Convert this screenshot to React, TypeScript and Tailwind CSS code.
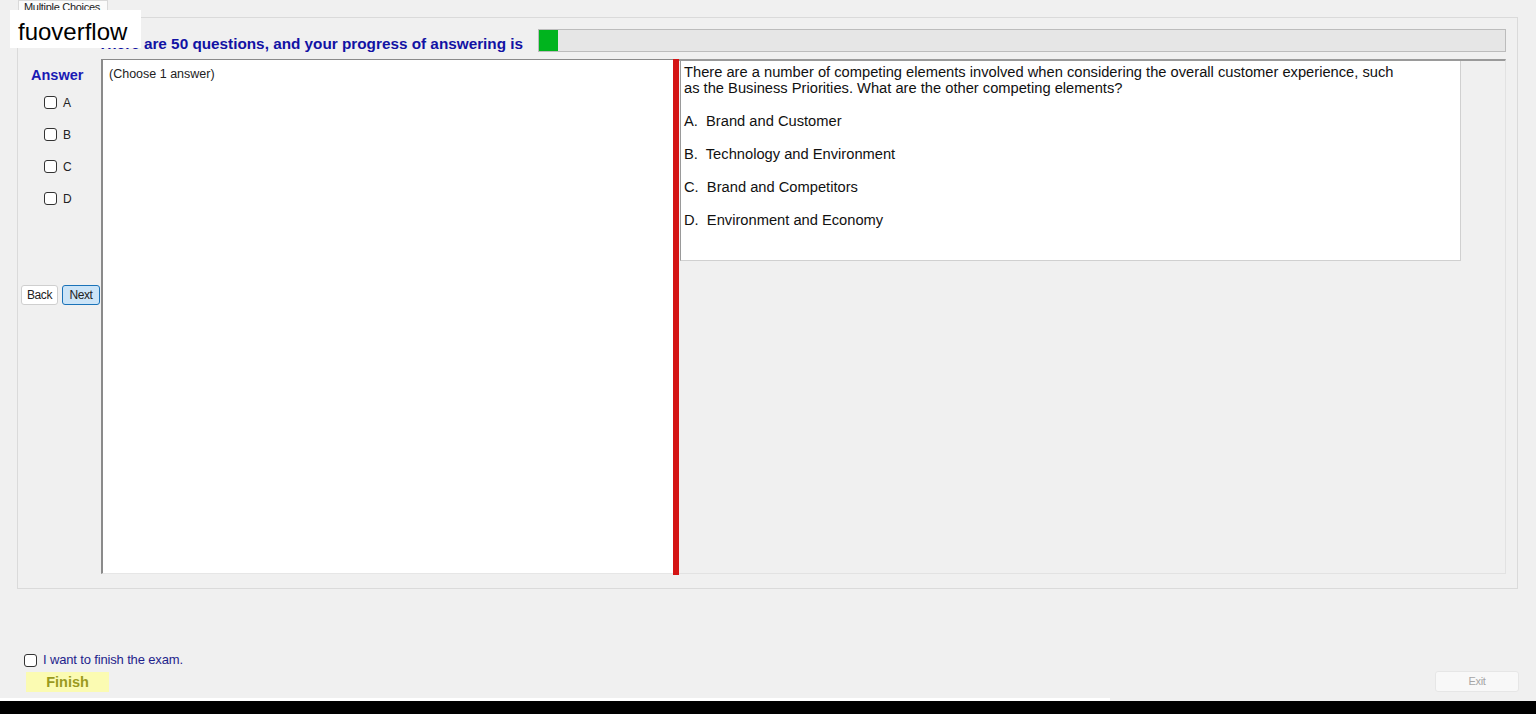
const options = [
  "Brand and Customer",
  "Technology and Environment",
  "Brand and Competitors",
  "Environment and Economy",
];

const Box = () => (
  <span className="inline-block w-[13px] h-[13px] border border-[#333333] rounded-[3px] bg-white" />
);

const App = () => {
  return (
    <div
      className="relative w-full h-[714px] overflow-hidden bg-[#f0f0f0] text-black flex flex-col"
      style={{ fontFamily: '"Liberation Sans", Arial, sans-serif' }}
    >
      {/* tab strip */}
      <div className="h-[17px] pl-[18px] flex">
        <div className="w-[90px] h-[17px] border border-b-0 border-[#d9d9d9] bg-[#fbfbfb] text-[11px] leading-[12px] pl-[5px] tracking-[-0.3px] text-[#222]">
          Multiple Choices
        </div>
      </div>

      {/* tab page */}
      <div className="ml-[17px] mr-[18px] h-[572px] border border-[#dadada] flex flex-col">
        <div className="h-[41px] pt-[11px] pl-[80px] pr-[11px] flex items-start">
          <div className="h-[22px] pt-[8px] flex items-center text-[15.3px] font-bold text-[#1212a4] whitespace-nowrap">
            There are 50 questions, and your progress of answering is
          </div>
          <div className="ml-[15px] flex-1 h-[23px] border border-[#bcbcbc] bg-[#e6e6e6] flex">
            <div className="w-[19px] h-full bg-[#00b41e]" />
          </div>
        </div>

        <div className="flex h-[516px]">
          {/* answer column */}
          <div className="w-[83px] flex flex-col">
            <div className="pl-[13px] pt-[8px] text-[14.5px] font-bold text-[#1a1ab4] leading-[16px]">
              Answer
            </div>
            <div className="flex flex-col gap-[19px] mt-[13px] pl-[26px]">
              {["A", "B", "C", "D"].map((l) => (
                <label key={l} className="flex items-center gap-[6px] h-[13px] text-[12px] text-[#222]">
                  <Box />
                  {l}
                </label>
              ))}
            </div>
            <div className="flex gap-[4px] pl-[3px] mt-[80px]">
              <button className="w-[37px] h-[20px] border border-[#cfcfcf] bg-white rounded-[3px] text-[12px] tracking-[-0.4px] text-[#222]">
                Back
              </button>
              <button className="w-[38px] h-[20px] border border-[#1a72b8] bg-[#cce4f7] rounded-[3px] text-[12px] tracking-[-0.4px] text-[#222]">
                Next
              </button>
            </div>
          </div>

          {/* answer notes */}
          <div className="w-[572px] h-[515px] bg-white border-l-2 border-t border-[#8a8a8a] border-b border-b-[#e6e6e6] pl-[6px] pt-[5px] text-[12.5px] text-[#222]">
            (Choose 1 answer)
          </div>

          {/* splitter */}
          <div className="w-[6px] h-[516px] bg-[#d41414]" />

          {/* question */}
          <div className="flex-1 mr-[11px] h-[515px] border-t-2 border-[#9a9a9a] border-r border-r-[#e2e2e2] border-b border-b-[#e2e2e2] pl-[1px]">
            <div className="w-[781px] h-[200px] bg-white border border-t-0 border-[#d0d0d0] border-l-[#9a9a9a] pl-[3px] pt-[3px] text-[14.7px] text-[#111]">
              <p className="leading-[16px]">
                There are a number of competing elements involved when considering the overall customer experience, such
                <br />
                as the Business Priorities. What are the other competing elements?
              </p>
              <div className="mt-[17px] flex flex-col gap-[17px]">
                {options.map((o, i) => (
                  <div key={o} className="leading-[16px] whitespace-pre">
                    {String.fromCharCode(65 + i)}.  {o}
                  </div>
                ))}
              </div>
            </div>
          </div>
        </div>
      </div>

      {/* finish area */}
      <div className="pl-[24px] pr-[17px] mt-[63px]">
        <label className="flex items-center gap-[6px] h-[16px] text-[13px] text-[#1f1f8c] tracking-[-0.15px]">
          <span className="inline-block w-[13px] h-[13px] border border-[#333333] rounded-[3px] bg-white" />
          I want to finish the exam.
        </label>
        <div className="flex justify-between items-start mt-[4px]">
          <button className="ml-[2px] w-[83px] h-[20px] bg-[#fbfbb2] text-[14.5px] font-bold text-[#9a9a1e]">
            Finish
          </button>
          <button className="w-[84px] h-[21px] -mt-[1px] bg-[#f8f8f8] border border-[#e6e6e6] rounded-[3px] text-[11px] text-[#a6a6a6] tracking-[-0.3px]">
            Exit
          </button>
        </div>
      </div>

      <div className="flex-1" />
      <div className="h-[3px] w-[1110px] bg-white" />
      <div className="h-[13px] bg-black" />

      {/* watermark */}
      <div className="absolute left-[10px] top-[10px] w-[131px] h-[38px] bg-white pl-[8px] text-[24px] leading-[44px] text-black">
        fuoverflow
      </div>
    </div>
  );
};

export default App;
